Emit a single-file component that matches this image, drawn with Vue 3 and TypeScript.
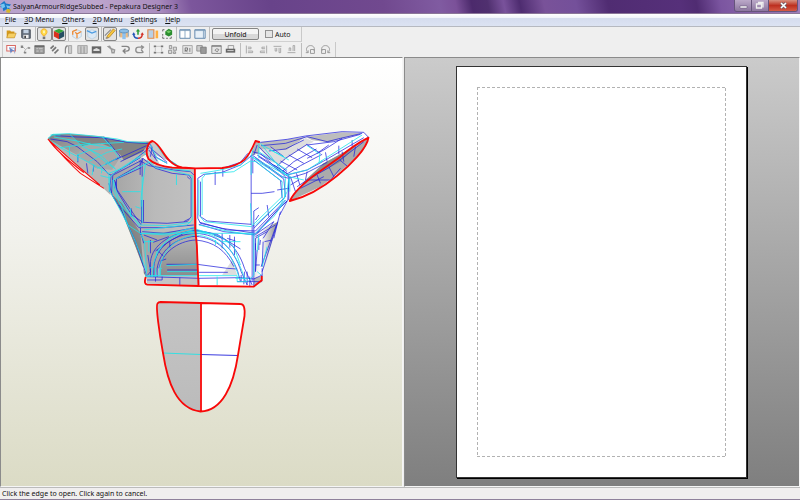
<script setup lang="ts">
import { ref } from 'vue'

interface Shape { d: string; f?: string; s?: string; w?: number }
interface Tool { name: string; shapes: Shape[]; on?: boolean }

const g = '#858585'
const menus = ['File', '3D Menu', 'Others', '2D Menu', 'Settings', 'Help']
const auto = ref(false)

const mainGroups: { id: string; tools: Tool[] }[] = [
  { id: 'pair', tools: [
    { name: 'Open', shapes: [{ d: 'M2 3h4l1 1h4v7H2z', f: '#d59a1c' }, { d: 'M4 6h9l-2 5.500H2z', f: '#f6cf62', s: '#b97f12', w: 0.6 }] },
    { name: 'Save', shapes: [{ d: 'M2 2h10v10H3l-1-1z', f: '#68717f', s: '#3f4753' }, { d: 'M4 2h6v4H4z', f: '#c3d1e2' }, { d: 'M4 8h6v4H4z', f: '#f0f0f0' }, { d: 'M5 9h2v3H5z', f: '#444' }] },
  ] },
  { id: 'pair', tools: [
    { name: 'Light', on: true, shapes: [{ d: 'M7 1C3.500 1 2.500 5 4.500 7L6 9h2l1.500-2C11.500 5 10.500 1 7 1z', f: '#ffd943', s: '#f0aa2c' }, { d: 'M6 3h2v3H6z', f: '#fff6c0' }, { d: 'M5.500 10h3v3h-3z', f: '#777' }] },
    { name: 'Texture', on: true, shapes: [{ d: 'M7 1l6 2.500-6 3-6-3z', f: '#35a735' }, { d: 'M1 3.500l6 3V13l-6-3z', f: '#d8321e' }, { d: 'M13 3.500l-6 3V13l6-3z', f: '#264f62' }] },
  ] },
  { id: 'pair', tools: [
    { name: 'Edges', shapes: [{ d: 'M2 4l5-2 5 2v6l-5 3-5-3z', f: '#e6eef6', s: '#a9c6dd', w: 0.8 }, { d: 'M2 8V4l5-2M5 5l2 2 5-3M7 7v5', s: '#f08b34', w: 1.5 }] },
    { name: 'Faces', on: true, shapes: [{ d: 'M2 4l5-2 5 2v6l-5 3-5-3z', f: '#dce9f5', s: '#b3cce0', w: 0.8 }, { d: 'M1 3l6 3 5-2', s: '#4b9be1', w: 1.5 }] },
  ] },
  { id: 'edit', tools: [
    { name: 'Pencil', on: true, shapes: [{ d: 'M11 1l2 2-7 8-3 1 1-3z', f: '#f8c73d', s: '#b98a2c' }, { d: 'M1 9l7-7M2 12l3-1', s: '#8b8b8b', w: 1.3 }] },
    { name: 'Cylinder', shapes: [{ d: 'M2 3h10v8H2z', f: '#edbd86' }, { d: 'M5 4h4v9H5z', f: '#8fc2ee' }, { d: 'M1.500 3.500c0-3 11-3 11 0s-11 3-11 0z', f: '#8dbfe6', s: '#5b8cb5' }, { d: 'M2 4v6M12 4v6', s: '#6b9cc5' }] },
    { name: 'Axes', shapes: [{ d: 'M7 3v5', s: '#2b9a36', w: 1.8 }, { d: 'M4.500 4L7 1l2.500 3z', f: '#2b9a36' }, { d: 'M2 7c0 4 2 5 5 5', s: '#2355b8', w: 1.8 }, { d: 'M7 12c4 0 5-2 5-5', s: '#d3332a', w: 1.8 }, { d: 'M0 8l2-3 2 3z', f: '#2355b8' }, { d: 'M10 8l2-3 2 3z', f: '#d3332a' }] },
    { name: 'Compare', shapes: [{ d: 'M1 2h7v10H1z', f: '#b8d0e6', s: '#e28a4a', w: 1.3 }, { d: 'M10 3h3v9h-3z', f: '#ffb041' }] },
    { name: 'Region', shapes: [{ d: 'M2 4V2h2M2 7v2M2 10v2h2M6 12h2M10 12h2v-2', s: '#555' }, { d: 'M5 4l4-3 4 2v5l-4 2-4-2z', f: '#2a8d2e' }, { d: 'M6 4l3-1 3 1-3 2z', f: '#71ca64' }] },
  ] },
  { id: 'pair', tools: [
    { name: 'Split view', shapes: [{ d: 'M1 2h12v10H1z', f: '#fff', s: '#4f7ba5' }, { d: 'M7 2v10M1 3h12', s: '#7f9fbc' }] },
    { name: 'Single view', shapes: [{ d: 'M1 2h12v10H1z', f: '#e7f0f8', s: '#4f7ba5' }, { d: 'M11 2v10M1 3h12', s: '#7f9fbc' }] },
  ] },
]

const subGroups: { id: string; tools: Tool[] }[] = [
  { id: 'ten', tools: [
    { name: 'Select', shapes: [{ d: 'M1 2h11v7H1z', f: '#fff', s: '#d86a64', w: 1.3 }, { d: 'M4 5h7v7', s: '#8a98c9' }, { d: 'M4 4l7 5-3 0-2 3z', f: '#6a85c5' }] },
    { name: 'Join', shapes: [{ d: 'M3 3l4 4-2 4M7 7l4-3', s: '#aaa' }, { d: 'M1 2h3v3H1zM10 4h3v2h-3zM5 10h3v2H5z', f: g }] },
    { name: 'Properties', shapes: [{ d: 'M1 2h12v10H1z', f: '#999', s: '#777' }, { d: 'M1 3h12', s: '#555' }, { d: 'M3 6h2M6 6h5M3 9h3M8 9h3', s: '#ddd' }] },
    { name: 'Flaps', shapes: [{ d: 'M2 6l4-4M4 9l5-5M7 12l5-5', s: '#777', w: 2.2 }] },
    { name: 'Rotate part', shapes: [{ d: 'M7 2h4v10H7z', f: '#ccc', s: '#999' }, { d: 'M6 2C3 3 3 5 3 7v5', s: g, w: 1.5 }] },
    { name: 'Columns', shapes: [{ d: 'M1 2h12v10H1z', f: '#ccc', s: '#999' }, { d: 'M5 3v9M9 3v9', s: g }] },
    { name: 'Image', shapes: [{ d: 'M1 3h12v9H1z', f: '#666' }, { d: 'M3 7l4-2 4 2v2H3z', f: '#ddd' }] },
    { name: 'Color', shapes: [{ d: 'M1 3l4-1 2 3 5 2-1 5H7L6 7z', f: '#999' }, { d: 'M8 8h2v2H8z', f: '#ddd' }] },
    { name: 'Undo', shapes: [{ d: 'M2 3h6c5 0 5 6 0 6H5M7 6L4 9l3 3', s: g, w: 1.7 }] },
    { name: 'Redo', shapes: [{ d: 'M11 4H6c-5 0-5 7 0 7h5M9 7l3 4M9 2l3 2-3 3', s: '#909090', w: 1.7 }] },
  ] },
  { id: 'six', tools: [
    { name: 'Frame', shapes: [{ d: 'M4 3h6M4 11h6M3 5v4M11 5v4', s: '#bbb' }, { d: 'M1 2h3v2H1zM10 2h3v2h-3zM1 10h3v2H1zM10 10h3v2h-3z', f: '#777' }] },
    { name: 'Arrange', shapes: [{ d: 'M3 2h3v4H3zM8 4h4v4H8zM2 8h4v4H2zM8 10h3v2H8z', f: '#ddd', s: g }] },
    { name: 'Numbers', shapes: [{ d: 'M1 2h12v10H1z', f: '#e5e5e5', s: '#999' }, { d: 'M4 10V5h3v3H4l3 2M10 5v5', s: '#666' }] },
    { name: 'Copy', shapes: [{ d: 'M1 2h7v7H1z', f: '#ccc', s: g }, { d: 'M6 4h7v8H6z', f: '#999', s: '#777' }] },
    { name: 'Preview', shapes: [{ d: 'M1 2h12v10H1z', f: '#e5e5e5', s: '#777' }, { d: 'M1 3h12M5 8l2-2 3 1-2 3z', s: '#777' }] },
    { name: 'Print', shapes: [{ d: 'M4 2h7v5H4z', f: '#eee', s: '#888' }, { d: 'M1 6h12v5H1z', f: '#666' }, { d: 'M3 8h8v1H3z', f: '#eee' }] },
  ] },
  { id: 'four', tools: [
    { name: 'Align left', shapes: [{ d: 'M3 2v10M5 4h4v2H5M5 9h6v2H5', s: '#999' }] },
    { name: 'Align right', shapes: [{ d: 'M11 2v10M9 4H5v2h4M9 9H3v2h6', s: '#999' }] },
    { name: 'Align top', shapes: [{ d: 'M2 3h10M4 5v4h2V5M9 5v6h2V5', s: '#999' }] },
    { name: 'Align bottom', shapes: [{ d: 'M2 11h10M4 9V5h2v4M9 9V2h2v7', s: '#999' }] },
  ] },
  { id: 'pair', tools: [
    { name: 'Turn left', shapes: [{ d: 'M4 11C0 8 2 2 7 2s6 5 4 7M1 11h3V8M7 7h5v5H7z', s: '#999', w: 1.2 }] },
    { name: 'Turn right', shapes: [{ d: 'M10 11c4-3 2-9-3-9S1 7 3 9M13 11h-3V8M2 7h5v5H2z', s: '#999', w: 1.2 }] },
  ] },
]

const fills: [string, string][] = [
  // left shoulder
  ['M22 42L35 28 85 26 185 34 260 50 335 48 322 85 300 100 212 150 210 210 178 180z', 'url(#wing)'],
  ['M85 28L150 33 260 50 330 52 305 82 250 106 240 90 215 68 150 58 125 64z', '#838383'],
  ['M150 58L185 56 215 68 240 95 215 135 165 130 110 90 125 64z', '#a8a8a8'],
  ['M22 42L110 90 165 130 212 150V205L178 180z', '#b6b6b6'],
  // left half of the torso
  ['M305 98L345 120 465 130 475 482 320 478 318 450 245 260 212 208 212 150z', 'url(#chest)'],
  ['M212 208L245 235 300 325 310 445 320 460 285 365 245 265z', 'url(#side)'],
  ['M302 328L465 312 470 340Q370 350 345 452H320z', '#a6a6a6'],
  ['M358 450C358 390 395 340 468 334L472 450z', 'url(#belly)'],
  ['M320 455H475V482L320 478z', '#c4c4c4'],
  // right half of the torso
  ['M465 130L550 128 600 112 625 90 645 50 655 80 740 150 748 185 740 228 712 290 665 455 640 485 475 482z', '#fff'],
  ['M645 325L712 290 665 455 640 460z', 'url(#flank)'],
  ['M640 460L665 452 662 468 640 485z', '#b5b5b5'],
  ['M545 450L575 405 590 450z', '#ddd'],
  // right shoulder
  ['M645 50L660 52 795 35 905 22 970 24 985 38 850 115 790 170 748 228 740 150 655 80z', '#fff'],
  ['M660 52L730 45 795 35 740 75 690 82 658 72z', '#bdbdbd'],
  ['M795 35L905 22 965 25 865 52 815 46z', '#bdbdbd'],
  ['M658 72L740 75 795 38 820 50 800 60 750 92 718 118 690 110z', '#dedede'],
  ['M645 50L660 55 655 85 632 92z', '#b5b5b5'],
  ['M985 38L970 75 905 135 840 185 748 228 790 170 850 115 950 60z', '#ababab'],
  ['M850 115L950 60 900 110 790 170z', '#8e8e8e'],
  // collar
  ['M318 85L322 60 335 48 350 58 375 95 420 125 360 124 328 108z', '#c9c9c9'],
  ['M345 90L385 108 420 125 360 124z', '#fff'],
]

const cyan = [
  // left shoulder
  'M22 40L38 28 85 26 150 32 230 42 262 50 318 53M26 44L60 68 150 115 205 145 245 130 300 95M40 36L110 48 150 58 215 70 240 105M30 30H60M88 28L125 64 180 90 225 132M185 35L215 68M125 64L150 58 180 56 250 52M110 90L150 75 215 68M145 110L200 82 245 72M170 130L230 100M60 68L150 55M87 65V92M112 88V108M160 118L155 150M185 128L183 145M150 75L200 115 225 132M205 145L206 200M180 152L205 158 215 150',
  // left chest plate
  'M300 92L222 142 208 158 208 198 232 242 262 300 300 325 M330 110L218 165 232 215 300 308M218 165V195L240 240 300 300 380 302 450 292M305 155V295M315 115L302 215V245M245 200H300M285 245L300 250M320 105L345 128 400 138 455 152V285L440 300 310 315M408 148V180M300 325L380 330 465 305M270 250V275M330 112L400 132 450 138',
  // right chest plate
  'M475 165V270L492 290 632 305 725 215V170L645 110 630 108 580 140 495 148 485 160V270M635 95L655 108 748 155M625 95L600 120 540 135 480 145M655 112L735 160 732 220 645 300M632 108V150M630 235L635 300M745 158L740 200 718 245M475 300L560 318 640 330 700 275 735 225',
  // lower body
  'M300 325L312 350 318 440 315 455 350 452M240 235L262 300 285 350 318 440M345 455V430M360 450V430L365 430M378 422L470 418M380 440H470M345 400L350 380 390 335 465 312 540 335 580 365 600 420M335 455C338 370 380 325 465 318C540 325 590 380 615 470M355 455C358 380 400 340 465 330C530 335 570 375 595 455M320 452H475M530 455V480M525 345V360M475 452H590V470H620M640 330V450L622 470M655 330L650 380M650 440L662 450M680 365L665 425M310 350H340M325 345V380M440 320L500 322M545 350H600M300 325L640 325M325 430L340 425M585 460H625',
  // right shoulder
  'M660 55L735 150 800 135 965 30M665 60L745 105M690 75L730 95M655 80L740 135M748 160V200M845 105L840 115M838 85L836 115M685 115L735 145M800 62L835 85M745 155L790 165',
  // collar
  'M345 55L375 98 410 120M330 60L350 100 380 115M350 58L380 100M305 82L325 95M640 60L632 95 655 110M655 55V100',
]
const blue = [
  // left shoulder
  'M30 42L80 50 110 65 170 110 205 148 212 150 300 98M45 32L110 36 185 38 262 52 325 56M225 104L318 62M240 110L310 75M265 118L325 70M195 118L240 95M112 90V112M138 115L142 145M160 120L158 140M212 150L207 200M217 150L213 205M205 175L215 210 245 260M190 35L240 95',
  // left chest plate
  'M228 160L300 118 307 100 345 130 395 145 445 150 452 160V275L440 290 380 295 307 292 272 268 228 195zM222 165L230 195 302 300M305 100V155M299 105V150M303 225V295M309 225V290M218 150L300 108 325 122 400 135 450 140 460 150M232 160L302 128M225 170L224 190M235 240L295 308 370 308 460 300M305 320L370 325 465 308M300 305V330M272 250V275M440 155L448 162M430 290L445 282',
  // right chest plate
  'M472 160L490 148 545 142 600 120 635 90 725 155 745 160 742 225 645 325 545 310 480 295 472 280zM480 170V275L500 288 632 298M632 90V300M637 95V145M632 205L665 205 702 200M640 305V258L655 248M524 140V180M547 130V155M650 90L740 145M645 100L730 162 735 215 640 310M655 95L748 158M720 165L725 220M640 105L725 170M478 292L560 315 645 318 735 225M475 298L550 320 645 330 715 250 740 228M710 195L745 190M622 85L600 112 540 132M655 270L645 285M680 240L685 275M650 60L640 90M635 80L655 85 690 105',
  // lower body
  'M330 455V410C335 360 390 322 465 318C545 322 590 360 612 430L635 480M340 455V425C345 370 395 328 465 325C535 328 580 370 602 440L620 480M350 455V430C358 380 400 338 465 334C530 338 570 380 592 440L600 470M355 430C365 385 410 348 465 345C520 350 555 375 580 425M345 378L385 350 435 322 465 315 530 328 600 372M338 352L385 335M310 330L350 345M322 390L330 440 320 452M360 408L377 402M378 418L470 418 560 430 590 432M380 435H470M475 442H562M320 455L475 460 600 458 640 462 665 450M418 458V480M320 465H365V455M345 455V470M350 375L370 395M388 350V368M545 325V370M568 330V368M582 335V390M560 340L585 348M520 330L545 340M635 300V470M640 300V470M645 340V440M620 440V480M612 440L610 478M602 450V470M628 455V485M645 355V375M655 340V375M640 470H665M590 470H640V485M475 460V480',
  'M712 290L665 440M700 290L668 340M708 300L662 425M680 320L645 340M695 345L672 350M668 350L665 425M660 345L658 360M650 375L645 440M645 420H658M720 260L712 290 700 340M740 228L718 270M650 325L700 290M645 335L705 300M285 350L318 452 M245 260L285 350M300 320L310 355M330 345V385M665 430V455',
  // right shoulder
  'M645 48L660 52 740 43 795 33 905 20 970 22 985 38M662 62L735 55 800 35 860 50 900 40 965 25M685 78L735 72 790 45M798 58L840 85M770 72L815 98M745 90L790 115M720 108L770 135M700 120L745 150M800 58L735 100 708 125M828 72L760 110 725 140M845 88L780 122 738 148M865 60L830 85M740 150L800 135 850 108 970 38M745 160L795 145 860 112M905 40L850 75 800 100M800 140L795 165M768 145L778 180M855 82L860 110M895 62V88M935 45V65M745 150V225M750 180L775 165M750 155L765 200M655 65L690 100 740 140M660 85L735 155M690 65L730 95M800 60L880 50 960 28',
  // underside of the right shoulder
  'M970 50L905 100 865 128 800 165 770 185M830 150L840 175M865 125L880 155M898 105L922 125M800 165L870 165 900 130M780 190L850 155M945 65L940 95M905 80L910 110',
  // collar
  'M330 58L345 100M322 62L380 112M325 75L350 108M335 65L330 95M345 95L380 115M375 98L405 118',
]
</script>

<template>
  <div class="window">
    <header class="titlebar">
      <svg class="logo" viewBox="0 0 14 14" aria-hidden="true">
        <path d="M0 4l5-4 2 3 6 1-3 3 3 5-6-2-3 2-1-4-3-1 2-2z" fill="#1b78c8" />
        <path d="M1 4l4-1 1 4-4 2zM7 5l5 1-3 3z" fill="#75c6f1" />
        <path d="M8 9l5 1-2 4-4-1z" fill="#d6b52d" />
      </svg>
      <h1>SaiyanArmourRidgeSubbed - Pepakura Designer 3</h1>
      <div class="controls">
        <button type="button" aria-label="Minimize"><svg viewBox="0 0 17 11"><path d="M5 6h7v2H5z" fill="#fff" stroke="#5b4a6c" stroke-width=".5" /></svg></button>
        <button type="button" aria-label="Restore"><svg viewBox="0 0 17 11"><path d="M6 2.500h5v5M4.500 4h5v4h-5z" fill="none" stroke="#eee" stroke-width="1.300" /></svg></button>
        <button type="button" class="close" aria-label="Close"><svg viewBox="0 0 17 11"><path d="M6 3l5 5M11 3L6 8" stroke="#646473" stroke-width="3" /><path d="M6 3l5 5M11 3L6 8" stroke="#fff" stroke-width="1.600" /></svg></button>
      </div>
    </header>

    <nav class="menubar">
      <a v-for="m in menus" :key="m" href="#"><u>{{ m[0] }}</u>{{ m.slice(1) }}</a>
    </nav>

    <div class="toolbars">
      <div class="bar bar-main">
        <div v-for="(grp, i) in mainGroups" :key="i" class="group" :class="grp.id">
          <button v-for="t in grp.tools" :key="t.name" type="button" :class="{ on: t.on }" :aria-label="t.name">
            <svg viewBox="0 0 14 14"><path v-for="(p, k) in t.shapes" :key="k" :d="p.d" :fill="p.f ?? 'none'" :stroke="p.s ?? 'none'" :stroke-width="p.w ?? 1" /></svg>
          </button>
        </div>
        <div class="unfold">
          <button type="button">Unfold</button>
          <label><input v-model="auto" type="checkbox">Auto</label>
        </div>
      </div>
      <div class="bar bar-sub">
        <div v-for="(grp, i) in subGroups" :key="i" class="group" :class="grp.id">
          <button v-for="t in grp.tools" :key="t.name" type="button" :aria-label="t.name">
            <svg viewBox="0 0 14 14"><path v-for="(p, k) in t.shapes" :key="k" :d="p.d" :fill="p.f ?? 'none'" :stroke="p.s ?? 'none'" :stroke-width="p.w ?? 1" /></svg>
          </button>
        </div>
      </div>
    </div>

    <main class="panes">
      <section class="model">
        <svg viewBox="1 58 400 428" aria-hidden="true">
          <defs>
            <linearGradient id="wing" x1="0" y1="0" x2="1" y2="1"><stop offset="0" stop-color="#808080" /><stop offset=".5" stop-color="#bcbcbc" /><stop offset="1" stop-color="#a8a8a8" /></linearGradient>
            <linearGradient id="chest" x1="0" y1="0" x2="1" y2="0"><stop offset="0" stop-color="#a4a4a4" /><stop offset=".5" stop-color="#bababa" /><stop offset="1" stop-color="#c2c2c2" /></linearGradient>
            <linearGradient id="side" x1="0" y1="1" x2="1" y2="0"><stop offset="0" stop-color="#505050" /><stop offset="1" stop-color="#a9a9a9" /></linearGradient>
            <linearGradient id="belly" x1="0" y1="0" x2="0" y2="1"><stop offset="0" stop-color="#b4b4b4" /><stop offset="1" stop-color="#8c8c8c" /></linearGradient>
            <linearGradient id="flank" x1="0" y1="0" x2="1" y2="0"><stop offset="0" stop-color="#e5e5e5" /><stop offset=".3" stop-color="#fff" /><stop offset="1" stop-color="#8d8d8d" /></linearGradient>
            <linearGradient id="tab" x1="0" y1="0" x2="0" y2="1"><stop offset="0" stop-color="#c5c5c5" /><stop offset="1" stop-color="#bbb" /></linearGradient>
          </defs>
          <!-- armour, drawn at three times its displayed size -->
          <g transform="translate(40 125) scale(.3333)" fill="none" stroke-linejoin="round">
            <path v-for="([d, f], i) in fills" :key="'f' + i" :d="d" :fill="f" />
            <path v-for="(d, i) in blue" :key="'b' + i" :d="d" stroke="#2020dc" stroke-width="2.200" />
            <path v-for="(d, i) in cyan" :key="'c' + i" :d="d" stroke="#1fe6ec" stroke-width="2.400" />
            <g stroke="#f80808" stroke-width="5.500" stroke-linecap="round">
              <path d="M465 130L395 128Q345 122 324 102Q314 85 322 62Q328 50 336 48C365 58 372 118 425 127L465 130L545 129Q590 124 612 104Q628 88 645 48L656 51" />
              <path d="M463 132L464 310 469 360 474 482M315 458Q310 478 320 479L474 483 640 485 664 466V455" />
              <path d="M984 38C980 70 930 120 890 152Q820 210 748 228Q765 192 830 145L900 95Q940 60 984 38z" />
            </g>
            <path d="M22 42Q80 110 120 145L190 190M24 44Q90 105 178 180M24 44Q50 82 130 143" stroke="#f80808" stroke-width="3.200" />
          </g>
          <!-- lower tab -->
          <path d="M160 302L200 303V411.500C176 409 167 382 162.500 353C159 334 155 306 157 303z" fill="url(#tab)" />
          <path d="M200 303L240 304Q245 304 244 316L237.500 355C233 385 222 411 200 411.500z" fill="#fff" />
          <path d="M162.500 353L200 354.500" stroke="#35dfe2" />
          <path d="M200 354.500L237.500 355.500" stroke="#3939df" />
          <path d="M160 302L240 304Q245 304 244 316L237.500 355C233 385 222 411 200 411.500C176 409 167 382 162.500 353C159 334 155 306 157 303.500Q158 302 160 302zM200.500 303V411.500" fill="none" stroke="#f80808" stroke-width="1.800" stroke-linejoin="round" />
        </svg>
      </section>
      <section class="layout">
        <div class="paper"><svg class="margins" aria-hidden="true"><rect width="100%" height="100%" fill="none" stroke="#b2b2b2" stroke-width="2" stroke-dasharray="3 2" /></svg></div>
      </section>
    </main>

    <footer class="status">Click the edge to open. Click again to cancel.</footer>
  </div>
</template>

<style>
body { margin: 0; }
</style>

<style scoped>
.window {
  height: 100vh;
  display: grid;
  grid-template-rows: 14px 13px 30px minmax(0, 1fr) 13px;
  font-family: "Noto Sans", "Open Sans", sans-serif;
  font-size: 7px;
  color: #111;
  background: #efefef;
  overflow: hidden;
}
button { padding: 0; border: 0; background: none; font: inherit; color: inherit; }
svg { display: block; }

.titlebar {
  display: flex;
  align-items: center;
  box-sizing: border-box;
  border-bottom: 1px solid #8a7698;
  background: linear-gradient(78deg, #b7a2cc 0, #bda6cd 12%, #a98cbe 20%, #7c569c 24%, #68438a 34%, #71498f 48%, #805ba1 55%, #7b5199 57%, #4c2a6c 59%, #50306f 61%, #79529b 63%, #4e2c70 65%, #795299 68%, #74509a 72%, #502c72 76%, #56307a 85%, #502c72 87%, #7b55a0 90%, #a080bc 100%);
}
.logo { width: 12px; height: 12px; }
h1 { margin: 0 0 0 1px; flex: 1; font-size: 7px; font-weight: 400; line-height: 12px; white-space: nowrap; }
.controls { display: flex; align-self: flex-start; margin-right: 2px; border: 1px solid #66547b; border-top: 0; border-radius: 0 0 3px 3px; overflow: hidden; }
.controls button { width: 17px; height: 11px; background: linear-gradient(#bba9c9, #8c769f); border-right: 1px solid #66547b; }
.controls svg { height: 11px; margin: auto; }
.controls .close { width: 28px; border: 0; background: linear-gradient(#d79080, #bd3020 50%, #d55a45); }

.menubar {
  display: flex;
  align-items: center;
  gap: 8px;
  padding-left: 5px;
  box-sizing: border-box;
  border-bottom: 1px solid #b6b9c0;
  background: linear-gradient(#fff 0, #f2f4fa 30%, #d5dcee 35%, #dce3f2 100%);
}
.menubar a { color: inherit; text-decoration: none; line-height: 10px; white-space: nowrap; }

.toolbars { padding-left: 2px; display: grid; grid-template-rows: 15px 15px; }
.bar { display: flex; align-items: center; justify-self: start; border-left: 1px solid #ccc; box-sizing: border-box; height: 15px; border-right: 1px solid #c9c9c9; }
.bar-main { border-bottom: 1px solid #d0d0d0; width: 300px; }
.group { display: grid; grid-auto-flow: column; grid-auto-columns: 1fr; box-sizing: border-box; padding: 0 2px 0 1px; border-right: 1px solid #bdbdbd; }
.group:last-child { border-right: 0; }
.group button { height: 14px; display: grid; place-items: center; box-sizing: border-box; }
.group svg { width: 12px; height: 12px; }
.bar-sub svg { width: 11px; height: 11px; }
.group .on { border: 1px solid #858585; border-radius: 2px; background: #e3e3e3; }
.pair { width: 33px; }
.bar-main .edit { width: 75px; }
.ten { width: 147px; }
.six { width: 91px; }
.four { width: 61px; }
.unfold { display: flex; align-items: center; gap: 6px; margin-left: 2px; }
.unfold button { width: 47px; height: 12px; box-sizing: border-box; line-height: 9px; border: 1px solid #858585; border-radius: 2px; background: linear-gradient(#f4f4f4 50%, #d8d8d8 50%); }
.unfold label { display: flex; align-items: center; gap: 2px; }
.unfold input { appearance: none; margin: 0; width: 8px; height: 8px; border: 1px solid #929292; background: #e5e5e5; box-sizing: border-box; }
.unfold input:checked { background: #46688e; }

.panes { display: grid; grid-template-columns: minmax(0, 403fr) minmax(0, 397fr); min-height: 0; }
.model, .layout { box-sizing: border-box; min-height: 0; border: 1px solid #8b8b8b; border-right-color: #f5f5f5; border-bottom-color: #f5f5f5; }
.model { background: linear-gradient(#fff, #f2f2ed 40%, #dbdbc5); }
.model svg { width: 100%; height: 100%; }
.layout { margin-left: 1px; padding: 8px 9px 8px 8px; display: flex; justify-content: center; background: linear-gradient(#cbcbcb, #7f7f7f); }
.paper { height: 100%; aspect-ratio: 291 / 412; box-sizing: border-box; border: 1px solid #333; padding: 20px; background: #fff; box-shadow: 1px 1px 0 #000; }
.margins { width: 100%; height: 100%; }

.status { box-sizing: border-box; border-top: 1px solid #bbb; border-bottom: 1px solid #8f819b; padding-left: 2px; line-height: 12px; background: #f0eeee; white-space: nowrap; }
</style>
